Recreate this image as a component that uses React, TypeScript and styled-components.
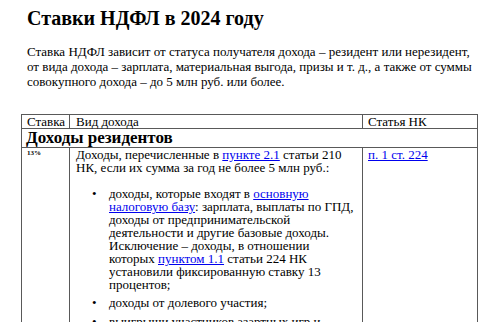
import React from "react";
import styled, { createGlobalStyle } from "styled-components";

const Global = createGlobalStyle`
  html, body { margin: 0; padding: 0; background: #fff; }
  html, body, #root, #root * {
    font-family: "Liberation Serif", "Times New Roman", Tinos, serif !important;
  }
`;

const Page = styled.div`
  width: 500px;
  height: 322px;
  overflow: hidden;
  padding: 0 0 0 21px;
  box-sizing: border-box;
  font-family: "Liberation Serif", serif;
  color: #000;
`;

const Title = styled.div`
  padding: 7px 0 0 6px;
  font-family: "Liberation Serif", serif;
  font-size: 20px;
  line-height: 23px;
  font-weight: 700;
`;

const Intro = styled.div`
  margin: 14px 0 0 6px;
  width: 450px;
  font-family: "Liberation Serif", serif;
  font-size: 13px;
  line-height: 15px;
`;

const Table = styled.div`
  margin-top: 25px;
  display: grid;
  grid-template-columns: 48px 293px 115px;
  width: 457px;
  box-sizing: border-box;
  border-top: 1px solid #595959;
  border-left: 1px solid #595959;
  font-family: "Liberation Serif", serif;
  font-size: 13px;
  line-height: 13px;
`;

const Cell = styled.div<{ $pl?: number }>`
  border-right: 1px solid #595959;
  border-bottom: 1px solid #595959;
  padding: 0 4px 0 ${(p) => p.$pl ?? 5}px;
  min-width: 0;
  font-family: "Liberation Serif", serif;
`;

const HeadCell = styled(Cell)`
  line-height: 13px;
`;

const SectionCell = styled.div`
  grid-column: 1 / span 3;
  border-right: 1px solid #595959;
  border-bottom: 1px solid #595959;
  padding: 0 5px 1px 4px;
  font-family: "Liberation Serif", serif;
  font-size: 17px;
  line-height: 17px;
  font-weight: 700;
`;

const Rate = styled.div`
  padding-top: 1px;
  font-family: "Liberation Serif", serif;
  font-size: 7px;
  line-height: 8px;
  font-weight: 700;
`;

const Link = styled.a`
  color: #0000ee;
  text-decoration: underline;
  font-family: "Liberation Serif", serif;
`;

const List = styled.div`
  margin: 13px 0 0;
  display: flex;
  flex-direction: column;
  gap: 5.3px;
`;

const Item = styled.div`
  display: grid;
  grid-template-columns: 33px 1fr;
  font-family: "Liberation Serif", serif;
`;

const Bullet = styled.span`
  padding-left: 16px;
  font-family: "Liberation Serif", serif;
  font-size: 13px;
`;

const items: React.ReactNode[] = [
  <>
    доходы, которые входят в <Link href="#">основную налоговую базу</Link>: зарплата,
    выплаты по ГПД, доходы от предпринимательской деятельности и другие базовые доходы.
    Исключение – доходы, в отношении которых <Link href="#">пунктом 1.1</Link> статьи 224 НК
    установили фиксированную ставку 13 процентов;
  </>,
  <>доходы от долевого участия;</>,
  <>выигрыши участников азартных игр и лотерей;</>,
  <>доходы по операциям с ценными бумагами и производными финансовыми инструментами;</>,
];

export default function App() {
  return (
    <Page>
      <Global />
      <Title>Ставки НДФЛ в 2024 году</Title>
      <Intro>
        Ставка НДФЛ зависит от статуса получателя дохода – резидент или нерезидент, от вида
        дохода – зарплата, материальная выгода, призы и т. д., а также от суммы совокупного
        дохода – до 5 млн руб. или более.
      </Intro>
      <Table>
        <HeadCell>Ставка</HeadCell>
        <HeadCell $pl={6}>Вид дохода</HeadCell>
        <HeadCell>Статья НК</HeadCell>
        <SectionCell>Доходы резидентов</SectionCell>
        <Cell>
          <Rate>13%</Rate>
        </Cell>
        <Cell $pl={6}>
          Доходы, перечисленные в <Link href="#">пункте 2.1</Link> статьи 210 НК, если их
          сумма за год не более 5 млн руб.:
          <List>
            {items.map((it, i) => (
              <Item key={i}>
                <Bullet>•</Bullet>
                <span>{it}</span>
              </Item>
            ))}
          </List>
        </Cell>
        <Cell>
          <Link href="#">п. 1 ст. 224</Link>
        </Cell>
      </Table>
    </Page>
  );
}
